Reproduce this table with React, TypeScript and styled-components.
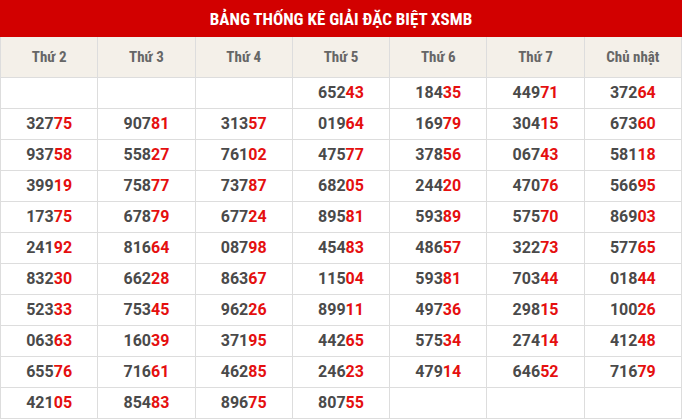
import React from 'react';
import styled, { createGlobalStyle } from 'styled-components';

const GlobalStyle = createGlobalStyle`
  html, body {
    margin: 0;
    padding: 0;
    background: #ffffff;
    font-family: Roboto, 'Liberation Sans', sans-serif;
  }
`;

const Table = styled.table`
  width: 682px;
  border-collapse: collapse;
  table-layout: fixed;
`;

const TitleCell = styled.th`
  height: 35px;
  padding: 0;
  background: #d20000;
  color: #ffffff;
  font-family: Roboto, 'DejaVu Sans Condensed', sans-serif;
  font-stretch: 75%;
  font-size: 17px;
  font-weight: 700;
  text-align: center;
  border: 1px solid #d20000;
`;

const DayCell = styled.th`
  height: 40px;
  padding: 0;
  background: #f4f0e9;
  color: #666666;
  font-family: Roboto, 'DejaVu Sans Condensed', sans-serif;
  font-stretch: 75%;
  font-size: 15px;
  font-weight: 700;
  text-align: center;
  border: 1px solid #dddddd;
`;

const NumCell = styled.td`
  height: 30px;
  padding: 0;
  line-height: 18px;
  text-align: center;
  border: 1px solid #dddddd;
  font-family: Roboto, 'Liberation Sans', sans-serif;
  font-size: 16px;
  font-weight: 700;
  color: #4a4a4a;
`;

const Tail = styled.span`
  color: #e50f0f;
`;

const DAYS = ['Thứ 2', 'Thứ 3', 'Thứ 4', 'Thứ 5', 'Thứ 6', 'Thứ 7', 'Chủ nhật'];

const ROWS: string[][] = [
  ['', '', '', '65243', '18435', '44971', '37264'],
  ['32775', '90781', '31357', '01964', '16979', '30415', '67360'],
  ['93758', '55827', '76102', '47577', '37856', '06743', '58118'],
  ['39919', '75877', '73787', '68205', '24420', '47076', '56695'],
  ['17375', '67879', '67724', '89581', '59389', '57570', '86903'],
  ['24192', '81664', '08798', '45483', '48657', '32273', '57765'],
  ['83230', '66228', '86367', '11504', '59381', '70344', '01844'],
  ['52333', '75345', '96226', '89911', '49736', '29815', '10026'],
  ['06363', '16039', '37195', '44265', '57534', '27414', '41248'],
  ['65576', '71661', '46285', '24623', '47914', '64652', '71679'],
  ['42105', '85483', '89675', '80755', '', '', ''],
];

const Prize: React.FC<{ value: string }> = ({ value }) =>
  value ? (
    <>
      {value.slice(0, 3)}
      <Tail>{value.slice(3)}</Tail>
    </>
  ) : null;

export default function App() {
  return (
    <>
      <GlobalStyle />
      <Table>
        <thead>
          <tr>
            <TitleCell colSpan={7}>BẢNG THỐNG KÊ GIẢI ĐẶC BIỆT XSMB</TitleCell>
          </tr>
          <tr>
            {DAYS.map(d => (
              <DayCell key={d}>{d}</DayCell>
            ))}
          </tr>
        </thead>
        <tbody>
          {ROWS.map((row, i) => (
            <tr key={i}>
              {row.map((v, j) => (
                <NumCell key={j}>
                  <Prize value={v} />
                </NumCell>
              ))}
            </tr>
          ))}
        </tbody>
      </Table>
    </>
  );
}
